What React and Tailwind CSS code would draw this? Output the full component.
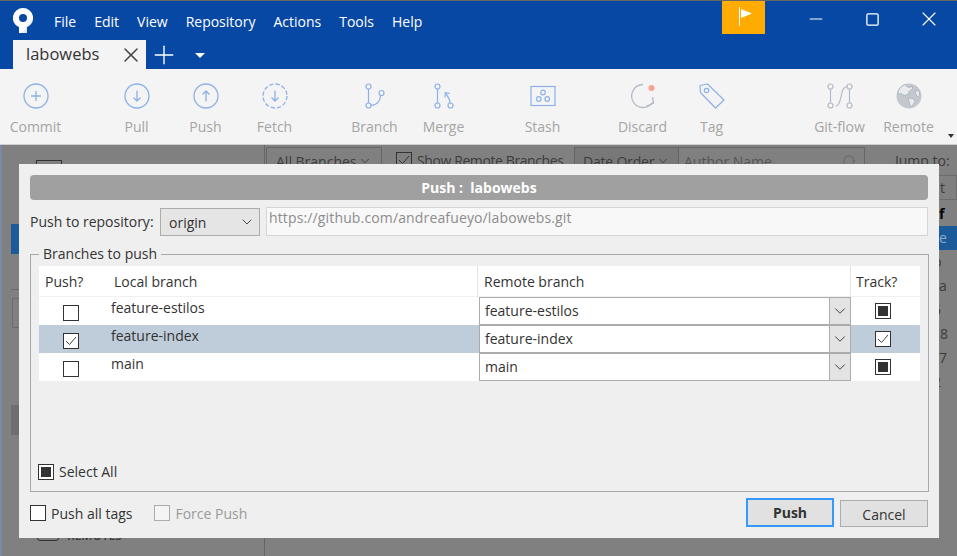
import React from 'react';
import { ChevronDown, Search, X, Plus, Minus, Square } from 'lucide-react';

const blue = '#8db1e9';
const grey = '#b4bbc7';

const CommitIcon = () => (
	<svg width="26" height="26" viewBox="0 0 26 26" fill="none" stroke={blue} strokeWidth="1.3">
		<circle cx="13" cy="13" r="12" />
		<path d="M13 8v10M8 13h10" />
	</svg>
);
const PullIcon = () => (
	<svg width="26" height="26" viewBox="0 0 26 26" fill="none" stroke={blue} strokeWidth="1.3">
		<circle cx="13" cy="13" r="12" />
		<path d="M13 7.500v10M9.500 14.500l3.500 3.500 3.500-3.500" />
	</svg>
);
const PushIcon = () => (
	<svg width="26" height="26" viewBox="0 0 26 26" fill="none" stroke={blue} strokeWidth="1.3">
		<circle cx="13" cy="13" r="12" />
		<path d="M13 18.500v-10M9.500 11.500L13 8l3.500 3.500" />
	</svg>
);
const FetchIcon = () => (
	<svg width="26" height="26" viewBox="0 0 26 26" fill="none" stroke={blue} strokeWidth="1.3">
		<circle cx="13" cy="13" r="12" strokeDasharray="4.200 2.100" />
		<path d="M13 7.500v10M9.500 14.500l3.500 3.500 3.500-3.500" />
	</svg>
);
const BranchIcon = () => (
	<svg width="26" height="26" viewBox="0 0 26 26" fill="none" stroke={blue} strokeWidth="1.2">
		<circle cx="6.500" cy="3.500" r="2.500" />
		<circle cx="6.500" cy="22.500" r="2.500" />
		<circle cx="19.500" cy="10" r="2.500" />
		<path d="M6.500 6v14M9 22.300c6 0 9.500-4.500 9.700-10" />
	</svg>
);
const MergeIcon = () => (
	<svg width="26" height="26" viewBox="0 0 26 26" fill="none" stroke={blue} strokeWidth="1.2">
		<circle cx="6.500" cy="3.500" r="2.500" />
		<circle cx="6.500" cy="22.500" r="2.500" />
		<circle cx="19.500" cy="22.500" r="2.500" />
		<path d="M6.500 6v14M19 20c0-4-2-6-4.500-10M14 14.500l.3-5 4.700 1" />
	</svg>
);
const StashIcon = () => (
	<svg width="26" height="22" viewBox="0 0 26 22" fill="none" stroke={blue} strokeWidth="1.2">
		<rect x="1" y="1.500" width="24" height="19" />
		<circle cx="13" cy="7.500" r="2.300" />
		<circle cx="8.800" cy="14" r="2.300" />
		<circle cx="17.200" cy="14" r="2.300" />
	</svg>
);
const DiscardIcon = () => (
	<svg width="26" height="26" viewBox="0 0 26 26" fill="none" stroke={grey} strokeWidth="1.3">
		<path d="M13 1.500A11.500 11.500 0 1 0 23 19" />
		<path d="M16.500 23l7-3-1-6" />
		<circle cx="21.500" cy="5" r="3" fill="#f9a090" stroke="none" />
	</svg>
);
const TagIcon = () => (
	<svg width="26" height="26" viewBox="0 0 26 26" fill="none" stroke={blue} strokeWidth="1.2">
		<path d="M1 2.500L8.500 1 25 17 16.500 25 1.500 9.500z" strokeLinejoin="round" />
		<circle cx="7.500" cy="7.500" r="2.200" />
	</svg>
);
const GitflowIcon = () => (
	<svg width="26" height="26" viewBox="0 0 26 26" fill="none" stroke={grey} strokeWidth="1.2">
		<circle cx="3.500" cy="3.500" r="2.500" />
		<circle cx="3.500" cy="22.500" r="2.500" />
		<circle cx="22.500" cy="3.500" r="2.500" />
		<circle cx="22.500" cy="22.500" r="2.500" />
		<path d="M3.500 6v14M22.500 6v14M20 3.500c-8 1-4 18-11 19.500" />
	</svg>
);
const RemoteIcon = () => (
	<svg width="26" height="26" viewBox="0 0 26 26">
		<circle cx="13" cy="13" r="12.500" fill="#c3c7ce" />
		<path d="M9 1.500l3 3 4-1 1 2-4 3-1 3-4 1-3-2-3 1 .5-4.500L6 3zM12 15l5 .5 2 3-3 5-2-1-1-4zM20 7l3 1 .8 4-2.300 2-2-3z" fill="#e9eaec" stroke="#a8adb7" strokeWidth="0.8" />
	</svg>
);

const tools = [
	{ label: 'Commit', Icon: CommitIcon, ml: 'ml-[1px]' },
	{ label: 'Pull', Icon: PullIcon, ml: 'ml-[32px]' },
	{ label: 'Push', Icon: PushIcon, ml: '' },
	{ label: 'Fetch', Icon: FetchIcon, ml: '' },
	{ label: 'Branch', Icon: BranchIcon, ml: 'ml-[31px]' },
	{ label: 'Merge', Icon: MergeIcon, ml: '' },
	{ label: 'Stash', Icon: StashIcon, ml: 'ml-[30px]' },
	{ label: 'Discard', Icon: DiscardIcon, ml: 'ml-[31px]' },
	{ label: 'Tag', Icon: TagIcon, ml: '' },
	{ label: 'Git-flow', Icon: GitflowIcon, ml: 'ml-[59px]' },
	{ label: 'Remote', Icon: RemoteIcon, ml: '' },
];

const branches = [
	{ name: 'feature-estilos', push: false, track: 'mixed' },
	{ name: 'feature-index', push: true, track: 'checked', selected: true },
	{ name: 'main', push: false, track: 'mixed' },
];

function Check({ state, className = '' }) {
	return (
		<span className={`flex h-4 w-4 shrink-0 items-center justify-center border border-[#333] bg-white ${className}`}>
			{state === 'mixed' && <span className="h-[10px] w-[10px] bg-[#333]" />}
			{state === 'checked' && (
				<svg width="12" height="10" viewBox="0 0 12 10" fill="none" stroke="#444" strokeWidth="1">
					<path d="M1 5l3.500 3.500L11 1" />
				</svg>
			)}
		</span>
	);
}

function RemoteSelect({ name }) {
	return (
		<div className="ml-[1px] flex h-[28px] items-stretch border border-[#acacac] bg-white">
			<span className="flex-1 pl-[5px] leading-[26px] text-[#333]">{name}</span>
			<span className="flex w-[21px] items-center justify-center border-l border-[#acacac] bg-[#e3e3e3]">
				<ChevronDown size={18} strokeWidth={1.2} color="#333" />
			</span>
		</div>
	);
}

function BranchRow({ name, push, track, selected }) {
	const bg = selected ? 'bg-[#bfccd9]' : 'bg-white';
	return (
		<div className={`grid h-[28px] grid-cols-[72px_367px_373px_69px] ${bg}`}>
			<div className="flex justify-center pr-[8px] pt-[8px]">
				<Check state={push ? 'checked' : 'none'} />
			</div>
			<div className="leading-[22px] text-[#333]">{name}</div>
			<RemoteSelect name={name} />
			<div className="flex justify-center pr-[5px] pt-[6px]">
				<Check state={track} />
			</div>
		</div>
	);
}

function Backdrop() {
	return (
		<div className="flex h-[411px] bg-[#808080] text-[14px] text-[#3c3c3c]">
			<aside className="flex w-[265px] shrink-0 flex-col border-l-2 border-r border-[#7a8ba5] border-r-[#666]">
				<div className="ml-[34px] mt-[15px] h-[6px] w-[26px] border border-[#333]" />
				<div className="ml-[9px] mt-[58px] h-[30px] w-[40px] bg-[#1d5a9a]" />
				<div className="ml-[9px] mt-[35px] h-px w-[40px] bg-[#6c6c6c]" />
				<div className="ml-[10px] mt-[8px] h-[30px] w-[40px] border border-[#6c6c6c]" />
				<div className="ml-[9px] mt-[77px] h-[30px] w-[40px] bg-[#6e6e6e]" />
				<div className="ml-[35px] mt-[92px] flex items-center gap-2 text-[12px] font-semibold">
					<span className="h-[10px] w-[22px] rounded-b-[3px] border border-[#333]" />
					REMOTES
				</div>
			</aside>
			<main className="flex min-w-0 flex-1 flex-col">
				<div className="flex h-[28px] items-start pt-[2px]">
					<div className="ml-[1px] flex h-[30px] w-[116px] items-center justify-between whitespace-nowrap border border-[#666] px-[9px] pb-[2px]">
						All Branches
						<ChevronDown size={14} strokeWidth={1.5} />
					</div>
					<span className="ml-[14px] mt-[5px] flex h-4 w-4 items-center justify-center border border-[#333]">
						<svg width="12" height="10" viewBox="0 0 12 10" fill="none" stroke="#333"><path d="M1 5l3.500 3.500L11 1" /></svg>
					</span>
					<span className="ml-[5px] mt-[3px] w-[157px] whitespace-nowrap tracking-[-0.4px]">Show Remote Branches</span>
					<div className="flex h-[30px] w-[105px] items-center justify-between whitespace-nowrap border border-[#666] bg-[#787878] px-[8px] pb-[2px] tracking-[-0.2px]">
						Date Order
						<ChevronDown size={14} strokeWidth={1.5} />
					</div>
					<div className="flex h-[30px] w-[186px] items-center justify-between whitespace-nowrap border border-l-0 border-[#666] pb-[2px] pl-[5px] pr-[7px] text-[#555]">
						Author Name
						<Search size={15} strokeWidth={1} />
					</div>
					<span className="ml-[30px] mt-[3px] whitespace-nowrap">Jump to:</span>
				</div>
				<div className="ml-auto mt-[2px] flex w-[28px] flex-col text-left leading-[24px]">
					<div className="h-[25px] border border-[#6c6c6c] pl-[10px]">t</div>
					<div className="mt-[2px] pl-[10px] font-bold text-black">f</div>
					<div className="bg-[#1d5a9a] pl-[10px] text-[#8fa9c9]">e</div>
					<div className="pl-[4px]">p</div>
					<div className="pl-[10px]">a</div>
					<div className="pl-[4px]">5</div>
					<div className="pl-[11px]">8</div>
					<div className="pl-[10px]">7</div>
					<div className="pl-[4px]">2</div>
				</div>
			</main>
		</div>
	);
}

function PushDialog() {
	return (
		<div className="absolute left-[19px] top-[164px] flex h-[374px] w-[920px] flex-col bg-[#efefef] px-[11px] pt-[11px] text-[14px] text-[#333]">
			<div className="flex h-[25px] items-center justify-center whitespace-pre rounded-[4px] bg-[#a0a0a0] font-bold text-white">
				Push :  labowebs
			</div>
			<div className="mt-[7px] flex items-start">
				<span className="mt-[4px] w-[130px] whitespace-nowrap">Push to repository:</span>
				<div className="mt-[1px] flex h-[28px] w-[100px] items-center justify-between border border-[#acacac] bg-[#e5e5e5] pl-[8px] pr-[4px]">
					origin
					<ChevronDown size={16} strokeWidth={1.3} color="#333" />
				</div>
				<div className="ml-[6px] h-[29px] flex-1 border border-[#d5d5d5] bg-[#f8f8f8] pl-[2px] leading-[20px] tracking-[0.14px] text-[#8c8c8c]">
					https://github.com/andreafueyo/labowebs.git
				</div>
			</div>
			<fieldset className="mt-[8px] h-[248px] border border-[#a9a9a9] px-[8px]">
				<legend className="px-[4px] leading-[20px]">Branches to push</legend>
				<div className="mt-[2px] flex flex-col">
					<div className="grid h-[31px] grid-cols-[72px_367px_373px_69px] border-b border-[#f0f0f0] bg-white leading-[31px]">
						<div className="pl-[6px]">Push?</div>
						<div className="border-r border-[#e4e4e4] pl-[3px]">Local branch</div>
						<div className="border-r border-[#e4e4e4] pl-[6px]">Remote branch</div>
						<div className="pl-[5px]">Track?</div>
					</div>
					{branches.map((b) => (
						<BranchRow key={b.name} {...b} />
					))}
				</div>
				<div className="mt-[80px] flex items-center gap-[5px]">
					<Check state="mixed" className="-ml-[1px]" />
					Select All
				</div>
			</fieldset>
			<div className="mt-[6px] flex items-start">
				<Check state="none" className="mt-[7px]" />
				<span className="ml-[5px] mt-[5px]">Push all tags</span>
				<span className="ml-[22px] mt-[7px] h-4 w-4 border border-[#acacac] bg-[#f4f4f4]" />
				<span className="ml-[5px] mt-[5px] text-[#9a9a9a]">Force Push</span>
				<button className="ml-auto h-[29px] w-[88px] border-2 border-[#3399ff] bg-[#e1e1e1] font-bold">Push</button>
				<button className="ml-[6px] mt-[2px] h-[27px] w-[88px] border border-[#adadad] bg-[#e1e1e1] pt-[2px]">Cancel</button>
			</div>
		</div>
	);
}

export default function App() {
	return (
		<div className="relative h-[556px] w-[957px] overflow-hidden font-['Open_Sans',sans-serif]">
			<header className="h-[69px] border-t border-[#666] bg-[#0848a5] text-white">
				<div className="flex h-[39px] items-start">
					<svg className="ml-[13px] mt-[7px]" width="20" height="25" viewBox="0 0 20 25">
						<defs>
							<linearGradient id="logo" x1="0.3" y1="0.3" x2="1" y2="1">
								<stop offset="0.5" stopColor="#fff" />
								<stop offset="1" stopColor="#a9c0e4" />
							</linearGradient>
						</defs>
						<path fillRule="evenodd" d="M10 0a10 10 0 0 1 4 19.200V25H6v-5.800A10 10 0 0 1 10 0zm0 6a4 4 0 1 0 0 8 4 4 0 0 0 0-8z" fill="url(#logo)" />
					</svg>
					<nav className="ml-[21px] mt-[11px] flex gap-[18px] text-[14px] leading-[20px]">
						{['File', 'Edit', 'View', 'Repository', 'Actions', 'Tools', 'Help'].map((m) => (
							<span key={m}>{m}</span>
						))}
					</nav>
					<div className="ml-auto flex items-start">
						<div className="flex h-[33px] w-[43px] items-start bg-[#ffab00] pl-[17px] pt-[6px]">
							<svg width="14" height="19" viewBox="0 0 14 19">
								<path d="M.5 0v19" stroke="#fff" />
								<path d="M2 2l11 4.500L2 11z" fill="#fff" />
							</svg>
						</div>
						<div className="ml-[22px] mt-[6px] flex h-[24px] w-[170px] items-center">
							<span className="flex w-[57px] justify-center"><Minus size={20} strokeWidth={1.2} /></span>
							<span className="flex w-[57px] justify-center"><Square size={15} strokeWidth={1.3} absoluteStrokeWidth /></span>
							<span className="flex w-[56px] justify-center"><X size={24} strokeWidth={1.1} /></span>
						</div>
					</div>
				</div>
				<div className="flex h-[29px] items-center">
					<div className="ml-[13px] flex h-[29px] w-[133px] items-center justify-between whitespace-nowrap bg-[#f4f4f4] pl-[13px] pr-[3px] text-[16.5px] text-[#333]">
						labowebs
						<X size={24} strokeWidth={1.5} color="#444" />
					</div>
					<Plus className="ml-[3px]" size={30} strokeWidth={1.1} />
					<span className="ml-[16px] mt-[2px] h-0 w-0 border-x-[5px] border-t-[5px] border-x-transparent border-t-white" />
				</div>
			</header>
			<div className="relative flex h-[76px] items-start border-b border-[#cfcfcf] bg-[#f4f4f4] pt-[14px]">
				{tools.map(({ label, Icon, ml }) => (
					<div key={label} className={`flex w-[69px] shrink-0 flex-col items-center ${ml}`}>
						<span className="flex h-[26px] items-center"><Icon /></span>
						<span className="mt-[8px] text-[14px] leading-[20px] text-[#a5a5a5]">{label}</span>
					</div>
				))}
				<span className="absolute right-[3px] top-[65px] h-0 w-0 border-x-[3.5px] border-t-[4px] border-x-transparent border-t-[#333]" />
			</div>
			<Backdrop />
			<PushDialog />
		</div>
	);
}
